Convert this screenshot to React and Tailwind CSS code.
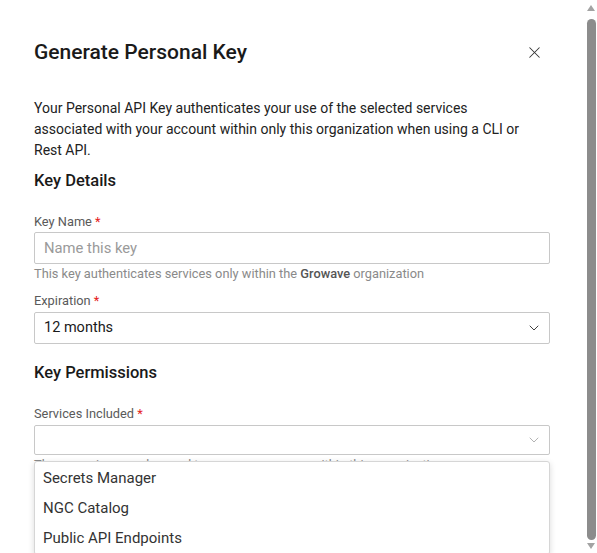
import { X, ChevronDown } from "lucide-react";

const Label = ({ children }) => (
  <label className="block text-[12.8px] leading-4 text-[#5a5a5a]">
    {children} <span className="text-[#e52020]">*</span>
  </label>
);

const services = ["Secrets Manager", "NGC Catalog", "Public API Endpoints"];

const Scrollbar = () => (
  <div className="flex w-[12px] shrink-0 flex-col items-center bg-white pt-[5px] pb-[4px]">
    <svg width="8" height="6" viewBox="0 0 8 6" className="shrink-0">
      <path d="M4 0 L8 6 L0 6 Z" fill="#a3a3a3" />
    </svg>
    <div className="mt-[8px] mb-[3px] w-[9px] flex-1 rounded-full bg-[#8c8c8c]" />
    <svg width="8" height="6" viewBox="0 0 8 6" className="shrink-0">
      <path d="M0 0 L8 0 L4 6 Z" fill="#a3a3a3" />
    </svg>
  </div>
);

export default function App() {
  return (
    <div
      className="flex h-screen overflow-hidden bg-white text-[#1a1a1a]"
      style={{ fontFamily: "Roboto, 'Liberation Sans', sans-serif" }}
    >
      <div className="min-w-0 flex-1 pl-[34px] pr-[35px] pt-[38px]">
        <div className="flex items-center justify-between">
          <h2 className="text-[21px] leading-7 font-medium">Generate Personal Key</h2>
          <button type="button" className="mr-[6px] text-[#333]">
            <X size={19} strokeWidth={1.3} />
          </button>
        </div>

        <p className="mt-[32px] max-w-[490px] text-[14px] leading-[21px] text-[#222]">
          Your Personal API Key authenticates your use of the selected services associated with your
          account within only this organization when using a CLI or Rest API.
        </p>

        <h3 className="mt-[8px] text-[16.5px] leading-6 font-medium">Key Details</h3>

        <div className="mt-[21px]">
          <Label>Key Name</Label>
          <input
            className="mt-[2px] block h-[32px] w-full rounded-[2px] border border-[#c8c8c8] px-[9px] text-[14.8px] placeholder:text-[#9a9a9a] outline-none"
            placeholder="Name this key"
          />
          <p className="mt-[2px] text-[12.8px] leading-4 text-[#8a8a8a]">
            This key authenticates services only within the{" "}
            <span className="font-medium text-[#555]">Growave</span> organization
          </p>
        </div>

        <div className="mt-[11px]">
          <Label>Expiration</Label>
          <div className="mt-[3px] flex h-[32px] items-center justify-between rounded-[2px] border border-[#c8c8c8] pl-[9px] pr-[7px] text-[14.5px] text-[#1a1a1a]">
            <span>12 months</span>
            <ChevronDown size={16} strokeWidth={1.4} className="text-[#333]" />
          </div>
        </div>

        <h3 className="mt-[17px] text-[16.5px] leading-6 font-medium">Key Permissions</h3>

        <div className="relative mt-[21px]">
          <Label>Services Included</Label>
          <div className="mt-[3px] flex h-[30px] items-center justify-end rounded-[2px] border border-[#c8c8c8] pr-[7px]">
            <ChevronDown size={16} strokeWidth={1.2} className="text-[#a0a0a0]" />
          </div>
          <p className="mt-[2px] text-[12.8px] leading-4 text-[#8a8a8a]">
            These services can be used to access resources within this organization
          </p>
          <ul className="absolute left-0 right-0 top-[55px] rounded-[3px] border border-[#d6d6d6] bg-white py-px text-[15px] text-[#333] shadow-[0_2px_6px_rgba(0,0,0,0.15)]">
            {services.map((s) => (
              <li key={s} className="flex h-[30px] items-center px-[8px]">
                {s}
              </li>
            ))}
          </ul>
        </div>
      </div>
      <Scrollbar />
    </div>
  );
}
